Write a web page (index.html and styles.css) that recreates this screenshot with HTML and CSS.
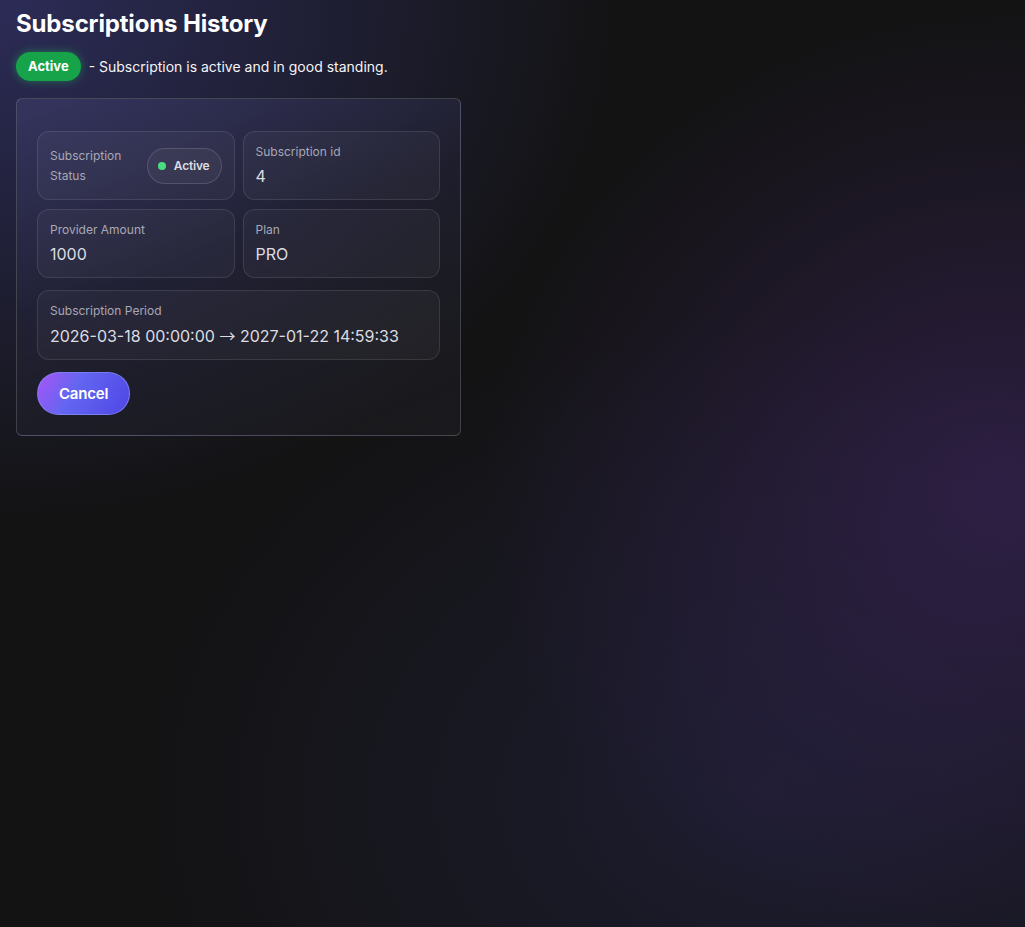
FILE: index.html
```html
<!DOCTYPE html>
<html lang="en">
<head>
<meta charset="utf-8">
<title>Subscriptions History</title>
<link rel="stylesheet" href="styles.css">
</head>
<body>
<main class="page">
  <h1 class="title">Subscriptions History</h1>
  <div class="legend">
    <span class="badge">Active</span>
    <span class="legend-text">- Subscription is active and in good standing.</span>
  </div>
  <section class="card">
    <div class="grid">
      <div class="cell cell-status">
        <div class="status-label">Subscription Status</div>
        <div class="pill"><span class="dot"></span><span>Active</span></div>
      </div>
      <div class="cell">
        <div class="label">Subscription id</div>
        <div class="value">4</div>
      </div>
      <div class="cell">
        <div class="label">Provider Amount</div>
        <div class="value">1000</div>
      </div>
      <div class="cell">
        <div class="label">Plan</div>
        <div class="value">PRO</div>
      </div>
    </div>
    <div class="cell cell-wide">
      <div class="label">Subscription Period</div>
      <div class="value">2026-03-18 00:00:00 <span class="arrow">→</span> 2027-01-22 14:59:33</div>
    </div>
    <div class="actions">
      <button class="btn-cancel" type="button">Cancel</button>
    </div>
  </section>
</main>
</body>
</html>
```

FILE: styles.css
```css
* { box-sizing: border-box; }

html, body {
  margin: 0;
  min-height: 100%;
}

body {
  min-height: 927px;
  font-family: Inter, "Noto Sans", "Liberation Sans", sans-serif;
  color: #f4f4f5;
  background-color: #131314;
  background-image:
    radial-gradient(ellipse 620px 520px at 0% 0%, rgba(52, 52, 110, 0.75), rgba(52, 52, 110, 0) 100%),
    radial-gradient(ellipse 520px 480px at 98% 53%, rgba(62, 38, 96, 0.6), rgba(62, 38, 96, 0) 100%),
    radial-gradient(ellipse 620px 480px at 74% 86%, rgba(40, 40, 80, 0.45), rgba(40, 40, 80, 0) 100%);
}

.page {
  padding: 8px 16px 16px;
}

.title {
  margin: 0;
  font-size: 24px;
  line-height: 32px;
  font-weight: 700;
  color: #ffffff;
  letter-spacing: -0.15px;
}

.legend {
  display: flex;
  align-items: center;
  gap: 8px;
  margin-top: 12px;
}

.badge {
  display: inline-block;
  padding: 6px 12px;
  border-radius: 999px;
  background: #16a34a;
  color: #ffffff;
  font-size: 13px;
  line-height: 17px;
  font-weight: 700;
  box-shadow: 0 0 10px rgba(34, 197, 94, 0.45);
}

.legend-text {
  font-size: 14px;
  line-height: 20px;
  color: #f4f4f6;
}

.card {
  width: 445px;
  margin-top: 17px;
  padding: 32px 20px 20px;
  border: 1px solid rgba(255, 255, 255, 0.17);
  border-radius: 6px;
  background: linear-gradient(160deg, rgba(62, 62, 108, 0.6) 0%, rgba(40, 40, 62, 0.38) 45%, rgba(30, 30, 34, 0.6) 100%);
}

.grid {
  display: grid;
  grid-template-columns: 1fr 1fr;
  gap: 9px 8px;
}

.cell {
  padding: 12px 12px 11px;
  border: 1px solid rgba(255, 255, 255, 0.1);
  border-radius: 12px;
  background: rgba(255, 255, 255, 0.035);
}

.cell-status {
  display: flex;
  align-items: center;
  justify-content: space-between;
  gap: 8px;
  padding-top: 11px;
  padding-bottom: 11px;
}

.status-label {
  font-size: 12px;
  line-height: 20px;
  color: #a8a8b4;
  flex: 1;
  min-width: 0;
}

.pill {
  display: flex;
  align-items: center;
  gap: 8px;
  padding: 10px 11px 10px 10px;
  border: 1px solid rgba(255, 255, 255, 0.14);
  border-radius: 999px;
  background: rgba(255, 255, 255, 0.04);
  font-size: 12px;
  line-height: 14px;
  font-weight: 600;
  letter-spacing: -0.2px;
  color: #dcdce2;
}

.dot {
  width: 8px;
  height: 8px;
  border-radius: 50%;
  background: #4ade80;
}

.label {
  font-size: 12px;
  line-height: 16px;
  color: #a8a8b4;
}

.value {
  margin-top: 4px;
  font-size: 16px;
  line-height: 24px;
  color: #dcdce2;
}

.arrow {
  font-family: "Noto Sans CJK JP", "DejaVu Sans", sans-serif;
}

.cell-wide {
  margin-top: 12px;
}

.actions {
  margin-top: 12px;
  display: flex;
}

.btn-cancel {
  font-family: inherit;
  padding: 12px 21px;
  border: 1px solid rgba(129, 140, 248, 0.7);
  border-radius: 999px;
  background: linear-gradient(120deg, #a855f7 0%, #6366f1 40%, #4f46e5 100%);
  color: #ffffff;
  font-size: 15px;
  line-height: 17px;
  font-weight: 600;
  letter-spacing: -0.2px;
  cursor: pointer;
}
```
